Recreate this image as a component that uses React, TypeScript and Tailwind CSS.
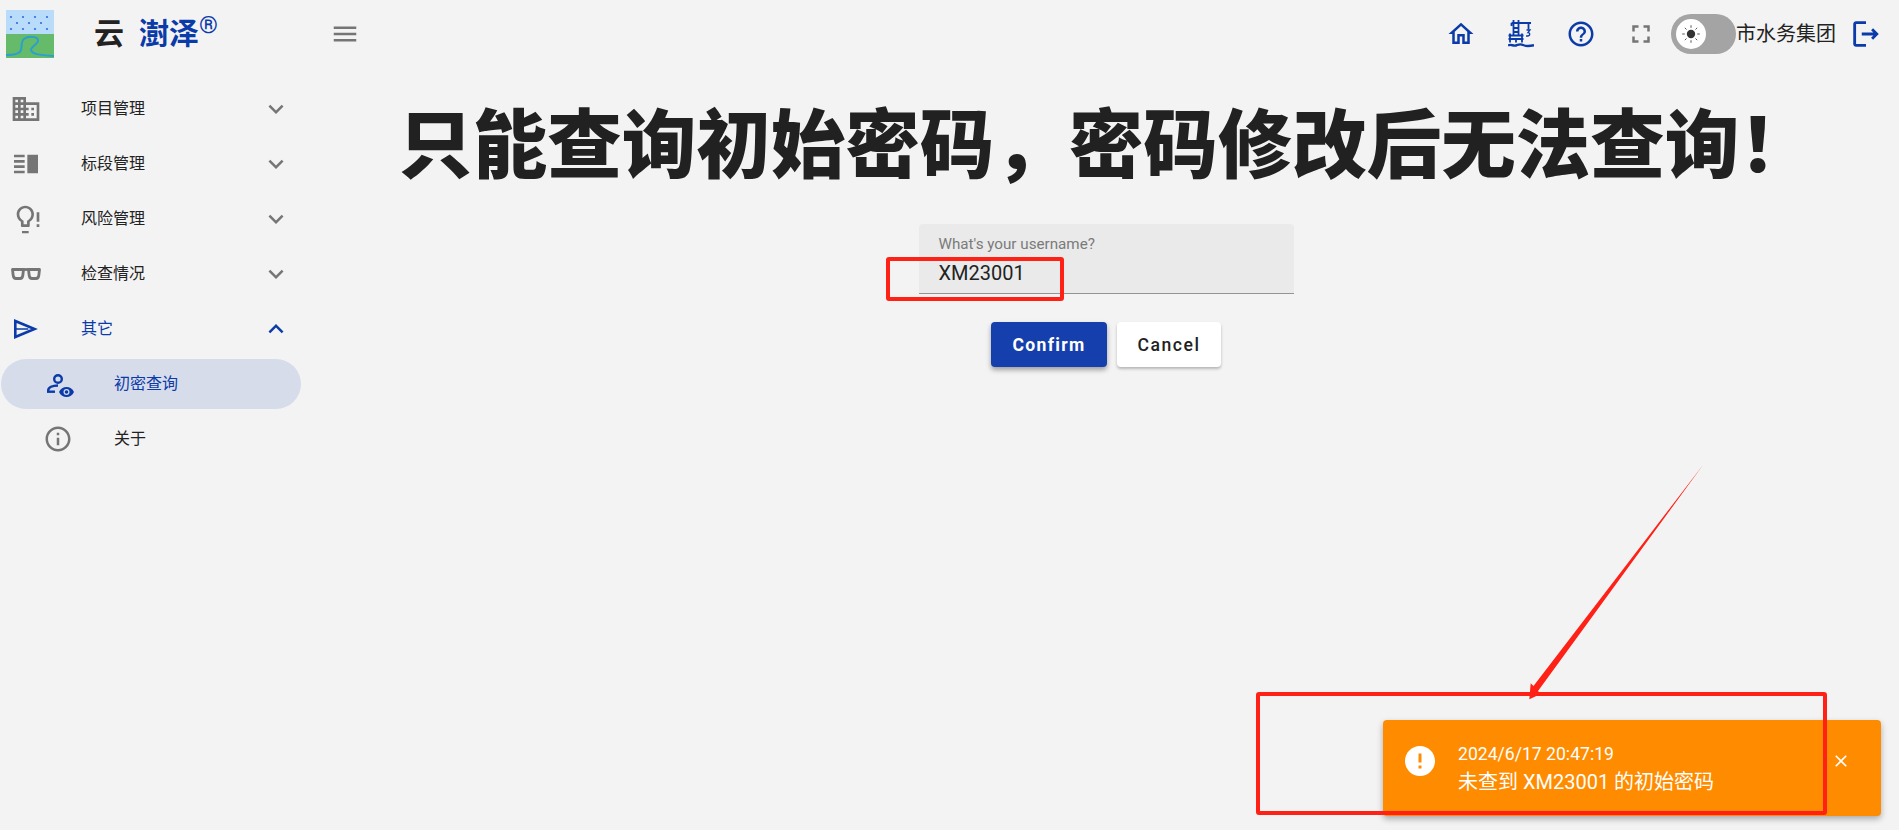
import React from "react";

const P = {
  domain: "M12 7V3H2v18h20V7H12zM6 19H4v-2h2v2zm0-4H4v-2h2v2zm0-4H4V9h2v2zm0-4H4V5h2v2zm4 12H8v-2h2v2zm0-4H8v-2h2v2zm0-4H8V9h2v2zm0-4H8V5h2v2zm10 12h-8v-2h2v-2h-2v-2h2v-2h-2V9h8v10zm-2-8h-2v2h2v-2zm0 4h-2v2h2v-2z",
  split: "M3 15h8v-2H3v2zm0 4h8v-2H3v2zm0-8h8V9H3v2zm0-6v2h8V5H3zm10 0h8v14h-8V5z",
  info: "M11 7h2v2h-2zm0 4h2v6h-2zm1-9C6.48 2 2 6.48 2 12s4.48 10 10 10 10-4.48 10-10S17.52 2 12 2zm0 18c-4.41 0-8-3.59-8-8s3.59-8 8-8 8 3.59 8 8-3.59 8-8 8z",
  home: "M12 5.69l5 4.5V18h-2v-6H9v6H7v-7.81l5-4.5M12 3L2 12h3v8h6v-6h2v6h6v-8h3L12 3z",
  help: "M11 18h2v-2h-2v2zm1-16C6.48 2 2 6.48 2 12s4.48 10 10 10 10-4.48 10-10S17.52 2 12 2zm0 18c-4.41 0-8-3.59-8-8s3.59-8 8-8 8 3.59 8 8-3.59 8-8 8zm0-14c-2.21 0-4 1.79-4 4h2c0-1.1.9-2 2-2s2 .9 2 2c0 2-3 1.75-3 5h2c0-2.25 3-2.5 3-5 0-2.21-1.79-4-4-4z",
  full: "M7 14H5v5h5v-2H7v-3zm-2-4h2V7h3V5H5v5zm12 7h-3v2h5v-5h-2v3zM14 5v2h3v3h2V5h-5z",
  menu: "M3 18h18v-2H3v2zm0-5h18v-2H3v2zm0-7v2h18V6H3z",
  more: "M16.59 8.59L12 13.17 7.41 8.59 6 10l6 6 6-6z",
  less: "M12 8l-6 6 1.41 1.41L12 10.83l4.59 4.58L18 14z",
  close: "M19 6.41L17.59 5 12 10.59 6.41 5 5 6.41 10.59 12 5 17.59 6.41 19 12 13.41 17.59 19 19 17.59 13.41 12z",
  error: "M12 2C6.48 2 2 6.48 2 12s4.48 10 10 10 10-4.48 10-10S17.52 2 12 2zm1 15h-2v-2h2v2zm0-4h-2V7h2v6z",
  logout: "M5 5h7V3H5c-1.1 0-2 .9-2 2v14c0 1.1.9 2 2 2h7v-2H5V5zm16 7l-4-4-1.41 1.41L17.17 11H9v2h8.17l-1.58 1.59L17 16l4-4z",
  bulb: "M9 21h5v1.6H9zM11.5 2C7.9 2 5 4.9 5 8.5c0 2.4 1.3 4.5 3.2 5.6V17c0 .6.4 1 1 1h4.6c.6 0 1-.4 1-1v-2.9c1.9-1.1 3.2-3.2 3.2-5.6C18 4.9 15.1 2 11.5 2zm2 10.9l-.7.4V16h-2.6v-2.7l-.7-.4C8 12 7 10.3 7 8.5 7 6 9 4 11.5 4S16 6 16 8.5c0 1.8-1 3.5-2.5 4.4zM20 7h2v7h-2zm0 9h2v2h-2z",
};

function Icon({ d, className }: { d: string; className: string }) {
  return (
    <svg viewBox="0 0 24 24" fill="currentColor" className={className}>
      <path d={d} />
    </svg>
  );
}

function Logo() {
  const dots: [number, number][] = [
    [5, 7], [17, 7], [29, 7], [41, 7],
    [11, 13], [23, 13], [35, 13],
    [5, 19], [17, 19], [29, 19], [41, 19],
  ];
  return (
    <svg viewBox="0 0 48 48" className="h-12 w-12 shrink-0">
      <rect width="48" height="24" fill="#b9dcfb" />
      <rect y="24" width="48" height="24" fill="#66bb6a" />
      {dots.map(([x, y], i) => (
        <circle key={i} cx={x} cy={y} r="1.1" fill="#2f6fd8" />
      ))}
      <path d="M0 45C8 45 14 44 15 40C16 36 15 31 18 29C22 26 31 26 32 30C33 34 25 36 25 40C26 44 32 45 48 46" fill="none" stroke="#2b9fd0" strokeWidth="2" />
    </svg>
  );
}

function Crane() {
  return (
    <svg viewBox="0 0 26 28" className="h-[28px] w-[26px]" fill="none" stroke="currentColor" strokeWidth="1.800">
      <path d="M5.500 0v15M10.500 0v15M3.500 3h19.500M20.500 3v6.500M3.500 3v3M5.500 8h5M5.500 12h5" />
      <path d="M0.500 15.500h15M0.500 19h15M2 13.500v9M8 19v3.500M14 13.500v9" />
      <path d="M0 25.500c3-2 5 1 8 0s4-2 7-.5 5 1.500 11 .2" strokeWidth="2.400" />
      <path d="M18.500 10h3.500l-2 2.500c2.200 0 2.500 3.500-.5 3.500h-1.500" strokeWidth="1.300" />
    </svg>
  );
}

function PersonEye() {
  return (
    <svg viewBox="0 0 28 26" className="ml-[3px] h-[26px] w-[28px]">
      <circle cx="12" cy="8" r="3.800" fill="none" stroke="currentColor" strokeWidth="2.400" />
      <path d="M2.200 20v-.5c0-3 4-5 9.800-5" fill="none" stroke="currentColor" strokeWidth="2.400" />
      <path d="M1 19.500h8v2.400H1z" fill="currentColor" />
      <path d="M13 21c1.500-3.300 4.300-5 7.500-5s6 1.700 7.500 5c-1.500 3.300-4.300 5-7.500 5s-6-1.700-7.500-5z" fill="currentColor" />
      <circle cx="20.500" cy="21" r="3" fill="#d6dcea" />
      <circle cx="20.500" cy="21" r="1.800" fill="currentColor" />
    </svg>
  );
}

function Send() {
  return (
    <svg viewBox="0 0 24 20" className="h-5 w-6" fill="none" stroke="currentColor">
      <path d="M1.300 2L20.500 10 1.300 18z" strokeWidth="2.600" />
      <path d="M1.300 10h13" strokeWidth="1.500" />
    </svg>
  );
}

function Glasses() {
  return (
    <svg viewBox="0 0 30 13" className="h-[13px] w-[30px]" fill="none" stroke="currentColor" strokeWidth="2.800" strokeLinejoin="round">
      <path d="M1.500 2.500h11l-.7 6c-.2 1.500-1.100 3-2.700 3H5c-1.600 0-2.600-1.500-2.800-3z" />
      <path d="M28.500 2.500h-11l.7 6c.2 1.500 1.100 3 2.700 3H25c1.600 0 2.600-1.500 2.800-3z" />
      <path d="M12.500 2.500h5" />
    </svg>
  );
}

function Row({ icon, label, open }: { icon: React.ReactNode; label: string; open?: boolean }) {
  return (
    <div className={"flex h-[55px] items-center " + (open ? "text-[#0b3aa9]" : "text-[#222222]")}>
      <div className={"flex w-[52px] justify-center " + (open ? "" : "text-[#757575]")}>{icon}</div>
      <span className="ml-[29px] w-[180px] text-base">{label}</span>
      <Icon d={open ? P.less : P.more} className={"h-[30px] w-[30px] " + (open ? "" : "text-[#757575]")} />
    </div>
  );
}

export default function App() {
  return (
    <div
      className="relative h-[830px] w-[1899px] overflow-hidden bg-[#f3f3f3] text-[#222222]"
      style={{ fontFamily: "Roboto, 'Noto Sans CJK SC', sans-serif" }}
    >
      <header className="flex h-[81px] items-start">
        <div className="ml-[6px] mt-[10px]">
          <Logo />
        </div>
        <div className="ml-[40px] mt-[12px] flex items-start font-bold leading-[44px]">
          <span className="text-[30px]">云</span>
          <span className="ml-[15px] text-[30px] text-[#0b3aa9]">澍泽</span>
          <span className="-mt-[9px] text-[24px] font-normal text-[#0b3aa9]">®</span>
        </div>
        <Icon d={P.menu} className="ml-[112px] mt-[19px] h-[30px] w-[30px] text-[#757575]" />
        <div className="ml-auto mr-[16px] mt-[14px] flex h-10 items-center">
          <Icon d={P.home} className="h-[30px] w-[30px] text-[#0b3aa9]" />
          <div className="ml-[32px] text-[#0b3aa9]">
            <Crane />
          </div>
          <Icon d={P.help} className="ml-[32px] h-[30px] w-[30px] text-[#0b3aa9]" />
          <Icon d={P.full} className="ml-[30px] h-[30px] w-[30px] text-[#757575]" />
          <div className="ml-[15px] flex h-10 w-[65px] items-center rounded-full bg-[#a4a4a4] pl-[5px]">
            <div className="flex h-[30px] w-[30px] items-center justify-center rounded-full bg-white">
              <svg viewBox="0 0 24 24" className="h-5 w-5 text-[#333333]" fill="currentColor">
                <circle cx="12" cy="12" r="5" />
                <path d="M12 1.500v3M12 19.500v3M1.500 12h3M19.500 12h3M4.600 4.600l2 2M17.400 17.400l2 2M4.600 19.400l2-2M17.400 6.600l2-2" stroke="currentColor" strokeWidth="1" />
              </svg>
            </div>
          </div>
          <span className="w-[100px] text-xl">市水务集团</span>
          <Icon d={P.logout} className="ml-[13px] h-[34px] w-[34px] text-[#0b3aa9]" />
        </div>
      </header>

      <div className="flex">
        <aside className="w-[313px] shrink-0">
          <Row icon={<Icon d={P.domain} className="h-8 w-8" />} label="项目管理" />
          <Row icon={<Icon d={P.split} className="h-8 w-8" />} label="标段管理" />
          <Row icon={<Icon d={P.bulb} className="h-8 w-8" />} label="风险管理" />
          <Row icon={<Glasses />} label="检查情况" />
          <Row icon={<Send />} label="其它" open />
          <div className="my-[2.500px] ml-[1px] flex h-[50px] w-[300px] items-center rounded-full bg-[#d6dcea] text-[#0b3aa9]">
            <div className="flex w-[114px] justify-center">
              <PersonEye />
            </div>
            <span className="-ml-[1px] text-base">初密查询</span>
          </div>
          <div className="flex h-[55px] items-center">
            <div className="flex w-[116px] justify-center text-[#757575]">
              <Icon d={P.info} className="h-[30px] w-[30px]" />
            </div>
            <span className="-ml-[2px] text-base">关于</span>
          </div>
        </aside>

        <main className="flex min-w-0 flex-1 flex-col items-center">
          <h1 className="mt-[16px] whitespace-nowrap text-[74.500px] font-black leading-[100px] text-[#212121]">
            只能查询初始密码，密码修改后无法查询！
          </h1>
          <div className="mt-[27px] flex h-[70px] w-[375px] flex-col rounded-t border-b border-[#949494] bg-[#eaeaea] px-5 pt-[10px]">
            <span className="text-[15.200px] leading-5 text-[#7a7a7a]">What's your username?</span>
            <span className="mt-[7px] text-xl leading-6 text-[#222222]">XM23001</span>
          </div>
          <div className="mt-[28px] flex gap-[10px]">
            <button className="h-[45px] w-[116px] rounded bg-[#153fac] pt-[1px] text-[17.600px] font-bold tracking-[1.300px] text-white shadow-[0_3px_5px_rgba(0,0,0,0.35)]">
              Confirm
            </button>
            <button className="h-[45px] w-[104px] rounded bg-white pt-[1px] text-[17.600px] font-medium tracking-[1.500px] text-[#222222] shadow-[0_2px_3px_rgba(0,0,0,0.25)]">
              Cancel
            </button>
          </div>
        </main>
      </div>

      <div className="absolute left-[1383px] top-[720px] flex h-[96px] w-[498px] items-center rounded bg-[#ff8c00] text-white shadow-[0_3px_6px_rgba(0,0,0,0.3)]">
        <Icon d={P.error} className="-mt-[15px] ml-[19px] h-9 w-9" />
        <div className="ml-[20px] flex-1 leading-[28px]">
          <div className="text-[17.600px]">2024/6/17 20:47:19</div>
          <div className="text-[20px]">未查到 XM23001 的初始密码</div>
        </div>
        <Icon d={P.close} className="-mt-[14px] mr-[30px] h-5 w-5" />
      </div>

      <div className="absolute left-[886px] top-[257px] h-[44px] w-[178px] rounded-[3px] border-4 border-[#ff2016]" />
      <div className="absolute left-[1256px] top-[692px] h-[123px] w-[571px] rounded-[3px] border-4 border-[#ff2016]" />
      <svg className="absolute left-[1520px] top-[460px] h-[250px] w-[190px]" viewBox="0 0 190 250" fill="#ff2016">
        <path d="M183 5L18 231L20.700 234L9.300 239.300L10.700 223.300L13.500 226Z" />
      </svg>
    </div>
  );
}
